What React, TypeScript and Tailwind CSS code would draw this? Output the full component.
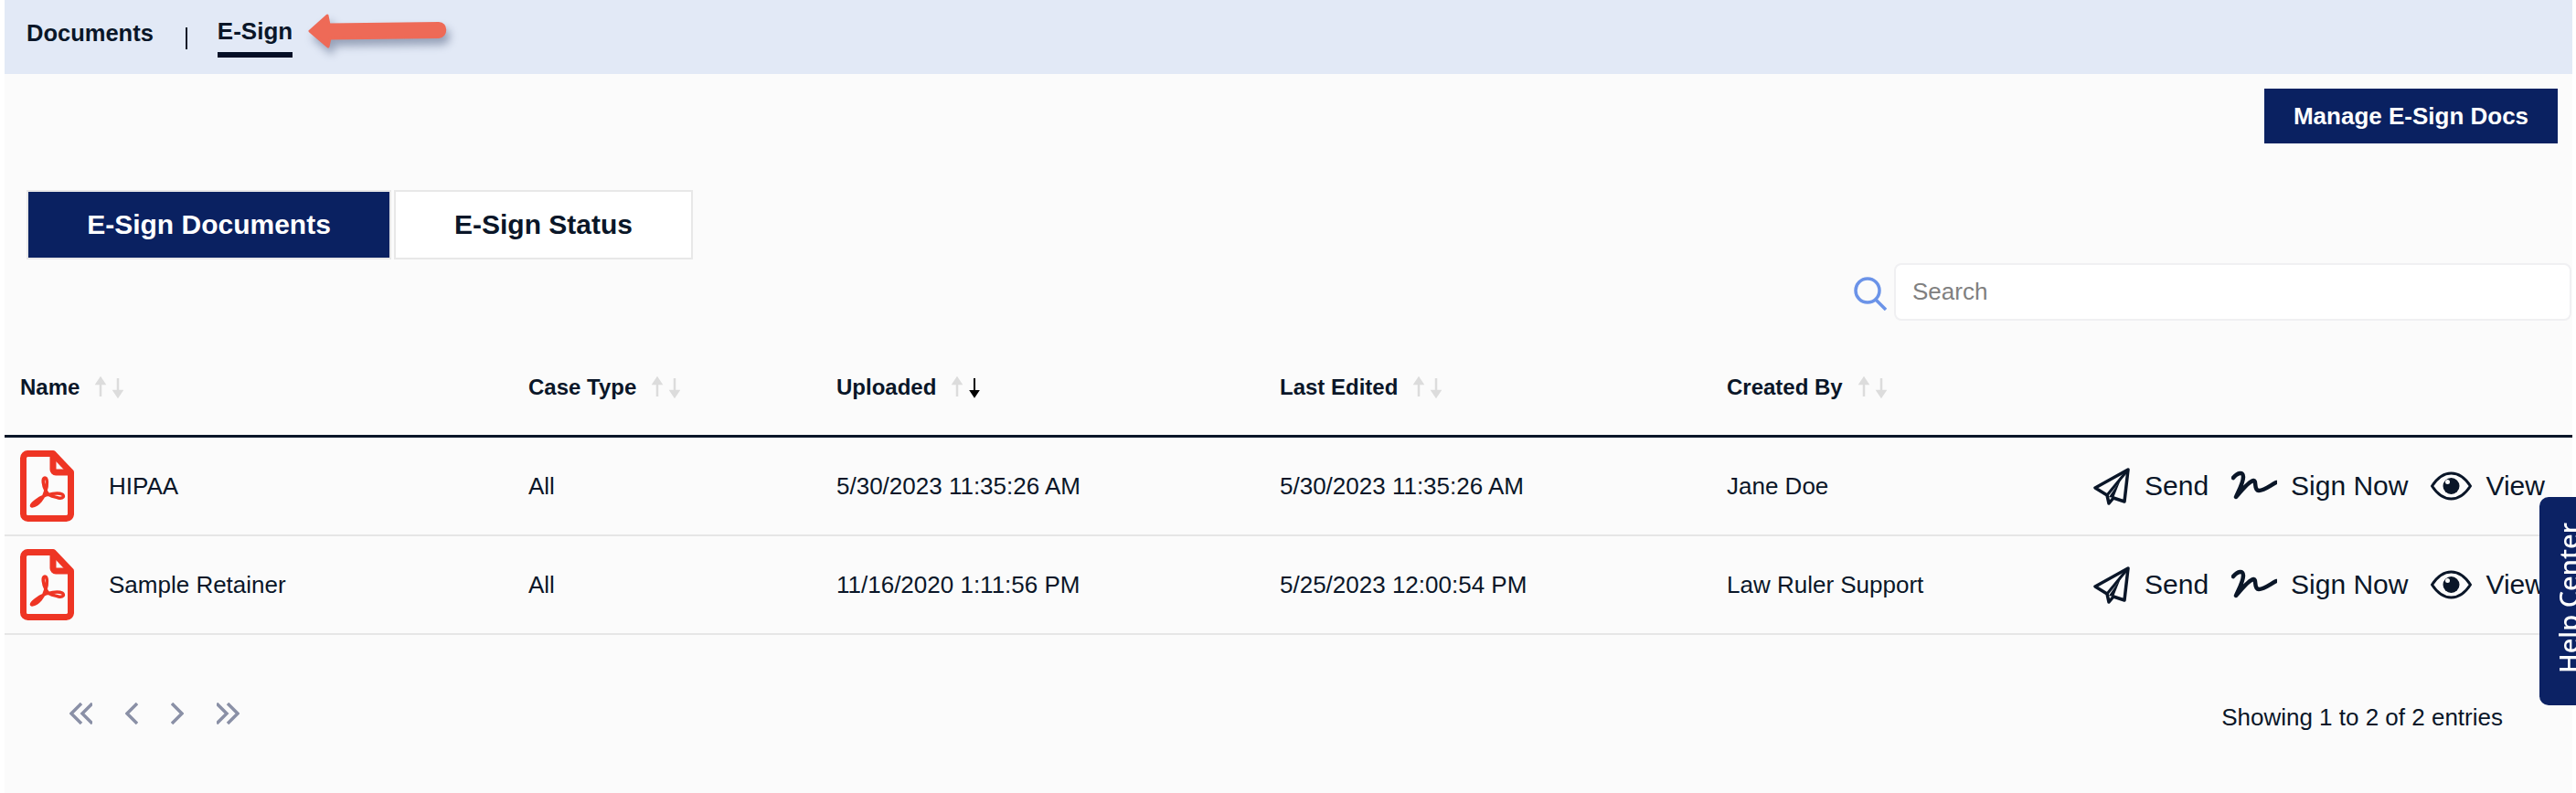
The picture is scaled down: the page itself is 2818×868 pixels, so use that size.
// E-Sign documents page
const rows = [
  { name: "HIPAA", caseType: "All", uploaded: "5/30/2023 11:35:26 AM", edited: "5/30/2023 11:35:26 AM", by: "Jane Doe" },
  { name: "Sample Retainer", caseType: "All", uploaded: "11/16/2020 1:11:56 PM", edited: "5/25/2023 12:00:54 PM", by: "Law Ruler Support" },
];

const columns = "grid grid-cols-[556px_337px_485px_489px_401px_1fr]";

function SortArrows({ active }: { active?: boolean }) {
  return (
    <svg width="31" height="24" viewBox="0 0 31 24" className="shrink-0">
      <path d="M6 22V3M2 8l4-6 4 6z" stroke="#dcdcdc" strokeWidth="2.5" fill="#dcdcdc" />
      <path
        d="M25 2v19M21 16l4 6 4-6z"
        stroke={active ? "#000000" : "#dcdcdc"}
        strokeWidth={active ? 2 : 2.5}
        fill={active ? "#000000" : "#dcdcdc"}
      />
    </svg>
  );
}

function HeaderCell({ label, active }: { label: string; active?: boolean }) {
  return (
    <div className="flex items-center gap-[17px] text-[24px] font-bold leading-none">
      <span>{label}</span>
      <SortArrows active={active} />
    </div>
  );
}

function PdfIcon() {
  return (
    <svg width="59" height="78" viewBox="0 0 59 78" fill="none" className="shrink-0">
      <path
        d="M8 3.5H36L55.5 24V69a5 5 0 0 1-5 5.5H8.500a5 5 0 0 1-5-5V8.500a5 5 0 0 1 5-5z"
        stroke="#ee3524"
        strokeWidth="7"
        strokeLinejoin="round"
      />
      <path d="M36 4v17a3 3 0 0 0 3 3h16" stroke="#ee3524" strokeWidth="7" strokeLinejoin="round" />
      <path
        d="M13 61C20 60 26 52 28 44C30 38 30 30 27 30C24 30 25 38 28 44C31 50 35 50 42 52C47 53 49 50 46 48C42 46 30 47 22 52C16 56 11 60 13 61Z"
        stroke="#ee3524"
        strokeWidth="3.5"
        strokeLinejoin="round"
      />
    </svg>
  );
}

function SendIcon() {
  return (
    <svg width="40" height="42" viewBox="5 5 40 42" fill="none" className="shrink-0">
      <path
        d="M43 8L7 28L20 36L22 45L27 39L39 43Z"
        stroke="#0a1628"
        strokeWidth="3.500"
        strokeLinejoin="round"
      />
      <path d="M43 8L20 36" stroke="#0a1628" strokeWidth="3" />
      <path d="M35 19L22 38L27 39Z" fill="#0a1628" />
    </svg>
  );
}

function SignIcon() {
  return (
    <svg width="50" height="34" viewBox="5 10 50 34" fill="none" className="shrink-0">
      <path
        d="M7 18C12 12 18 11 18 17C18 24 12 34 10 39C16 32 24 22 29 21C33 20 29 32 35 32C41 32 48 26 54 23"
        stroke="#0a1628"
        strokeWidth="4.500"
        strokeLinecap="round"
        strokeLinejoin="round"
      />
    </svg>
  );
}

function EyeIcon() {
  return (
    <svg width="45" height="32" viewBox="0 0 45 32" fill="none" className="shrink-0">
      <path
        d="M1.500 16C8 6 15 2 22.500 2S37 6 43.500 16C37 26 30 30 22.500 30S8 26 1.500 16Z"
        stroke="#0a1628"
        strokeWidth="3"
        strokeLinejoin="round"
      />
      <circle cx="22.500" cy="16" r="9" fill="#0a1628" />
      <circle cx="18.500" cy="11.500" r="2.500" fill="#fbfbfb" />
    </svg>
  );
}

function Action({ icon, label, gap }: { icon: React.ReactNode; label: string; gap: string }) {
  return (
    <div className={`flex items-center ${gap} text-[30px] leading-none`}>
      {icon}
      <span>{label}</span>
    </div>
  );
}

function Pager() {
  const line = { stroke: "#8a90a6", strokeWidth: 3.5, fill: "none" };
  return (
    <div className="flex items-center gap-[36px]">
      <svg width="25" height="24" viewBox="0 0 25 24">
        <path d="M13 1L2 12L13 23M25 1L14 12L25 23" {...line} />
      </svg>
      <svg width="14" height="24" viewBox="0 0 14 24">
        <path d="M13 1L2 12L13 23" {...line} />
      </svg>
      <svg width="14" height="24" viewBox="0 0 14 24">
        <path d="M1 1L12 12L1 23" {...line} />
      </svg>
      <svg width="25" height="24" viewBox="0 0 25 24">
        <path d="M0 1L11 12L0 23M12 1L23 12L12 23" {...line} />
      </svg>
    </div>
  );
}

export default function App() {
  return (
    <div className="relative h-screen overflow-hidden bg-white pl-[5px] pr-[4px] font-['Liberation_Sans',Arial,sans-serif] text-[#0a1628]">
      <div className="flex h-full flex-col bg-[#fbfbfb]">
        <nav className="relative flex h-[81px] shrink-0 items-start bg-[#e2e9f6] pl-[24px] text-[26px] font-bold leading-none">
          <span className="mt-[24px] text-[25.500px]">Documents</span>
          <span className="ml-[35px] mt-[30px] h-[24px] w-[2px] bg-[#0a1628]" />
          <div className="ml-[33px] mt-[21px] flex flex-col">
            <span>E-Sign</span>
            <span className="mt-[10px] h-[6px] bg-[#050f26]" />
          </div>
          <svg
            width="155"
            height="44"
            viewBox="0 0 155 44"
            className="absolute left-[330px] top-[12px] drop-shadow-[4px_7px_5px_rgba(60,75,110,0.45)]"
          >
            <path
              d="M4 22L23 5L25 15L145 13.500C154 13.500 154 28 145 28.500L26 30L24 39Z"
              fill="#ee6a57"
              stroke="#ee6a57"
              strokeWidth="3"
              strokeLinejoin="round"
            />
          </svg>
        </nav>

        <div className="flex justify-end pr-[16px] pt-[16px]">
          <button className="h-[60px] w-[321px] bg-[#0a2161] text-[26px] font-bold leading-none text-white">
            Manage E-Sign Docs
          </button>
        </div>

        <div className="ml-[24px] mt-[51px] flex gap-[3px] text-[30px] font-bold leading-none">
          <button className="h-[76px] w-[399px] border-2 border-[#e8e8e8] bg-[#0a2161] text-white">
            E-Sign Documents
          </button>
          <button className="h-[76px] w-[327px] border-2 border-[#e8e8e8] bg-white">E-Sign Status</button>
        </div>

        <div className="mt-[4px] flex items-center justify-end gap-[8px]">
          <svg width="36" height="37" viewBox="0 0 36 37" fill="none" className="mt-[4px]">
            <circle cx="15" cy="15" r="13" stroke="#6b93e8" strokeWidth="3.500" />
            <path d="M24 25L35 36" stroke="#6b93e8" strokeWidth="3.500" />
          </svg>
          <div className="mr-[1px] flex h-[63px] w-[741px] items-center rounded-[8px] border-2 border-[#f0f0f2] bg-white pl-[18px] text-[26px] text-[#808080]">
            Search
          </div>
        </div>

        <div className={`${columns} h-[128px] shrink-0 items-center border-b-[3px] border-[#0a1628] pl-[17px] pt-[20px]`}>
          <HeaderCell label="Name" />
          <HeaderCell label="Case Type" />
          <HeaderCell label="Uploaded" active />
          <HeaderCell label="Last Edited" />
          <HeaderCell label="Created By" />
        </div>

        {rows.map((row) => (
          <div
            key={row.name}
            className={`${columns} h-[108px] shrink-0 items-center border-b-2 border-[#e6e6e6] pl-[17px] text-[26px] leading-none`}
          >
            <div className="flex items-center gap-[38px]">
              <PdfIcon />
              <span>{row.name}</span>
            </div>
            <span>{row.caseType}</span>
            <span>{row.uploaded}</span>
            <span>{row.edited}</span>
            <span>{row.by}</span>
            <div className="flex items-center gap-[25px]">
              <Action icon={<SendIcon />} label="Send" gap="gap-[16px]" />
              <Action icon={<SignIcon />} label="Sign Now" gap="gap-[15px]" />
              <Action icon={<EyeIcon />} label="View" gap="gap-[15px]" />
            </div>
          </div>
        ))}

        <div className="flex items-start justify-between pl-[71px] pr-[76px] pt-[74px]">
          <Pager />
          <span className="mt-[3px] text-[26px] leading-none">Showing 1 to 2 of 2 entries</span>
        </div>
      </div>

      <div className="absolute right-0 top-[544px] h-[228px] w-[40px] overflow-hidden rounded-l-[10px] bg-[#0c2264]">
        <span className="absolute left-[12px] top-[33px] h-[160px] whitespace-nowrap text-center font-['Noto_Sans',sans-serif] text-[29px] font-medium leading-[40px] text-white [writing-mode:vertical-rl] rotate-180">
          Help Center
        </span>
      </div>
    </div>
  );
}
